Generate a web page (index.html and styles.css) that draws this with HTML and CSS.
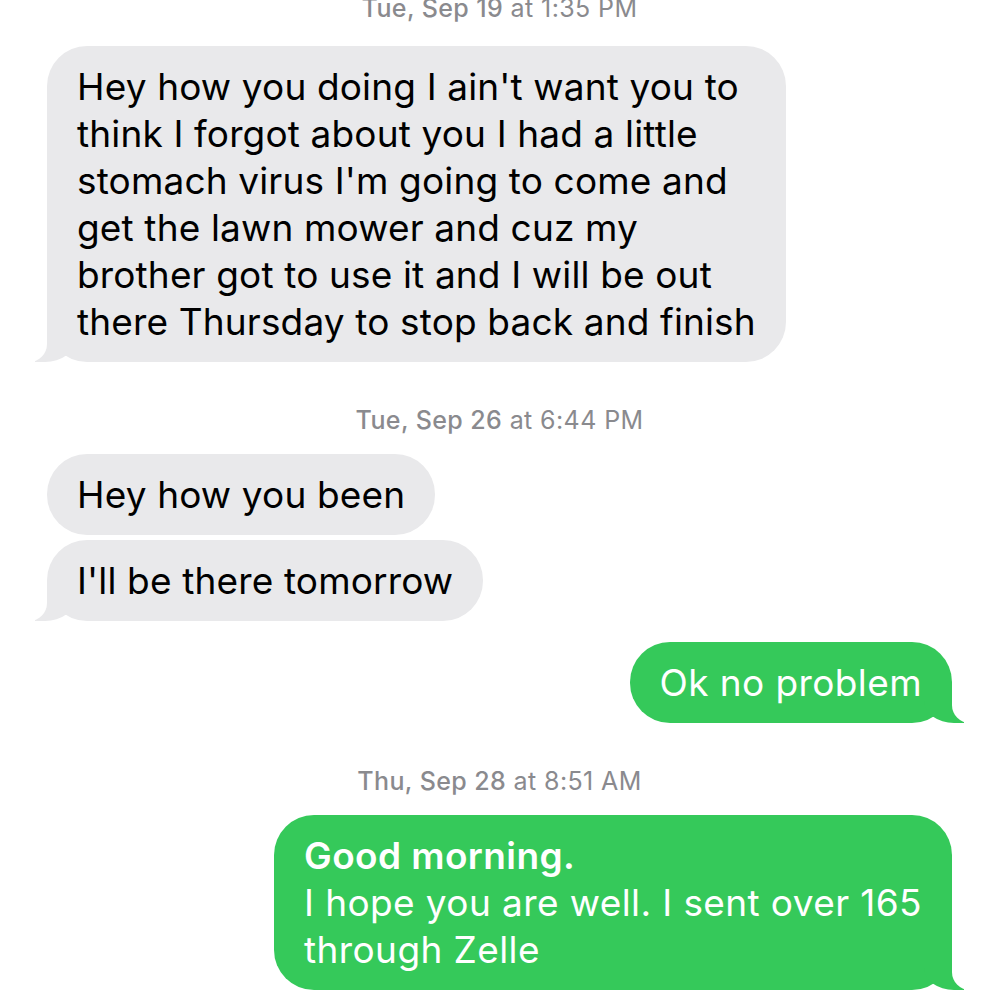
FILE: index.html
```html
<!DOCTYPE html>
<html lang="en">
  <head>
    <meta charset="UTF-8" />
    <meta name="viewport" content="width=device-width, initial-scale=1.0" />
    <title>Messages</title>
    <link rel="stylesheet" href="styles.css">
  </head>
  <body>
    <div class="thread">
      <div class="stamp first"><b>Tue, Sep 19</b> at 1:35 PM</div>

      <div class="bubble in tail">
        Hey how you doing I ain't want you to<br>
        think I forgot about you I had a little<br>
        stomach virus I'm going to come and<br>
        get the lawn mower and cuz my<br>
        brother got to use it and I will be out<br>
        there Thursday to stop back and finish
      </div>

      <div class="stamp"><b>Tue, Sep 26</b> at 6:44 PM</div>

      <div class="bubble in">Hey how you been</div>
      <div class="bubble in tail next">I'll be there tomorrow</div>

      <div class="bubble out tail switch">Ok no problem</div>

      <div class="stamp"><b>Thu, Sep 28</b> at 8:51 AM</div>

      <div class="bubble out tail">
        <b>Good morning.</b><br>
        I hope you are well. I sent over 165<br>
        through Zelle
      </div>
    </div>
  </body>
</html>
```

FILE: styles.css
```css
body {
  margin: 0;
  background-color: #fff;
  font-family: Inter, "Liberation Sans", Arial, sans-serif;
  overflow: hidden;
}
.thread {
  display: flex;
  flex-direction: column;
  padding: 0 48px 0 47px;
}
.stamp {
  align-self: center;
  margin: 43px 0 19px;
  color: #8a8a8e;
  font-size: 25px;
  line-height: 30px;
  letter-spacing: 0.4px;
}
.stamp.first {
  margin-top: -7px;
  margin-bottom: 23px;
}
.stamp b {
  font-weight: 500;
}
.bubble {
  position: relative;
  padding: 17px 30px;
  border-radius: 40px;
  font-size: 37px;
  line-height: 47px;
  letter-spacing: 0.15px;
  white-space: nowrap;
}
.bubble b {
  font-weight: 600;
}
.in {
  align-self: flex-start;
  background-color: #e9e9eb;
  color: #000;
}
.out {
  align-self: flex-end;
  background-color: #35c95a;
  color: #fff;
  letter-spacing: 0.4px;
}
.next {
  margin-top: 5px;
}
.switch {
  margin-top: 21px;
}

/* tails */
.tail::before,
.tail::after {
  content: "";
  position: absolute;
  bottom: 0;
  height: 40px;
}
.in.tail::before {
  left: -12px;
  width: 40px;
  background-color: #e9e9eb;
  border-bottom-right-radius: 30px 22px;
}
.in.tail::after {
  left: -40px;
  width: 40px;
  background-color: #fff;
  border-bottom-right-radius: 18px;
}
.out.tail::before {
  right: -12px;
  width: 40px;
  background-color: #35c95a;
  border-bottom-left-radius: 30px 22px;
}
.out.tail::after {
  right: -40px;
  width: 40px;
  background-color: #fff;
  border-bottom-left-radius: 18px;
}
```
